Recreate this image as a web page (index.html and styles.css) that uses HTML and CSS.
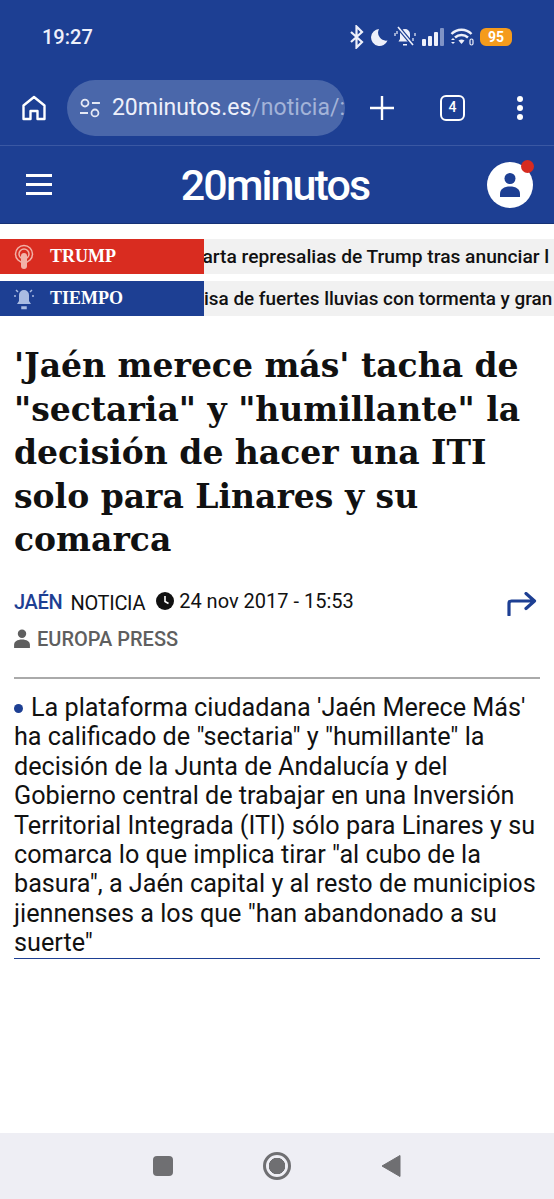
FILE: index.html

```html
<!DOCTYPE html>
<html lang="es">
<head>
  <meta charset="UTF-8" />
  <meta name="viewport" content="width=device-width, initial-scale=1.0"/>
  <title>20minutos</title>
  <link rel="stylesheet" href="styles.css">
</head>
<body>
  <!-- Status bar -->
  <div class="status-bar">
    <span class="clock">19:27</span>
    <div class="status-icons">
      <svg width="15" height="24" viewBox="0 0 15 24"><path d="M2 7l11 10-5.500 5.500V1.500L13 7 2 17" fill="none" stroke="#eef0fa" stroke-width="2.200"/></svg>
      <svg width="18" height="19" viewBox="0 0 18 19"><path d="M9 1a8.500 8.500 0 1 0 8.500 11.500A8 8 0 0 1 9 1z" fill="#eef0fa"/></svg>
      <svg width="22" height="22" viewBox="0 0 22 22"><path d="M11 3a5 5 0 0 1 5 5v5l1.500 2.500h-13L6 13V8a5 5 0 0 1 5-5zM9 18h4v1.500H9z" fill="#eef0fa"/><path d="M1 7v3M21 7v3M3 5v3M19 12v3" stroke="#eef0fa" stroke-width="1.200"/><path d="M4 1l15 18" stroke="#1d3f93" stroke-width="4"/><path d="M4 1l15 18" stroke="#eef0fa" stroke-width="1.600"/></svg>
      <svg width="22" height="18" viewBox="0 0 22 18"><rect x="0" y="11" width="4" height="7" rx="1" fill="#eef0fa"/><rect x="6" y="8" width="4" height="10" rx="1" fill="#eef0fa"/><rect x="12" y="4" width="4" height="14" rx="1" fill="#eef0fa"/><rect x="18" y="0" width="4" height="18" rx="1" fill="#7f93c6"/></svg>
      <svg width="24" height="20" viewBox="0 0 24 20"><path d="M1.500 7a14 14 0 0 1 20 0M5 10.500a9.500 9.500 0 0 1 13 0" fill="none" stroke="#eef0fa" stroke-width="2.400"/><path d="M8.500 13.500a5 5 0 0 1 6 0L11.500 17z" fill="#eef0fa"/><path d="M1 13l2-2 2 2zM1 15l2 2 2-2z" fill="#eef0fa"/><rect x="20" y="12" width="3" height="6" rx="1.500" fill="none" stroke="#eef0fa" stroke-width="1.200"/></svg>
      <span class="battery">95</span>
    </div>
  </div>

  <!-- Browser toolbar -->
  <div class="browser-bar">
    <svg class="home-icon" width="26" height="28" viewBox="0 0 26 28"><path d="M2.500 25V11.500L13 3l10.500 8.500V25h-7v-8h-7v8z" fill="none" stroke="#fff" stroke-width="2.400" stroke-linejoin="round"/></svg>
    <div class="url-pill">
      <svg width="22" height="20" viewBox="0 0 22 20"><circle cx="6" cy="5" r="3.500" fill="none" stroke="#e4e8f4" stroke-width="1.800"/><path d="M13 5h8M1 15h8" stroke="#e4e8f4" stroke-width="1.800"/><circle cx="16" cy="15" r="3.500" fill="none" stroke="#e4e8f4" stroke-width="1.800"/></svg>
      <span class="url-text">20minutos.es<span class="url-path">/noticia/:</span></span>
    </div>
    <svg class="plus-icon" width="26" height="26" viewBox="0 0 26 26"><path d="M13 1v24M1 13h24" stroke="#fff" stroke-width="2.400"/></svg>
    <span class="tab-count">4</span>
    <div class="menu-dots"><i></i><i></i><i></i></div>
  </div>

  <!-- Site header -->
  <header class="site-header">
    <div class="burger"><i></i><i></i><i></i></div>
    <span class="logo">20minutos</span>
    <div class="avatar">
      <svg width="22" height="26" viewBox="0 0 22 26"><circle cx="11" cy="6.500" r="5.500" fill="#1d3f93"/><path d="M1 25v-3c0-5 4-7.500 10-7.500s10 2.500 10 7.500v3z" fill="#1d3f93"/></svg>
      <span class="avatar-dot"></span>
    </div>
  </header>

  <!-- Tickers -->
  <div class="tickers">
    <div class="ticker">
      <div class="ticker-label red">
        <svg width="20" height="26" viewBox="0 0 20 26"><circle cx="10" cy="10" r="8.500" fill="none" stroke="#f2b2a8" stroke-width="1.500"/><circle cx="10" cy="10" r="5" fill="none" stroke="#f2b2a8" stroke-width="1.500"/><rect x="7" y="9" width="6" height="16" rx="3" fill="#f2b2a8"/></svg>
        <span>TRUMP</span>
      </div>
      <p class="ticker-text">carta represalias de Trump tras anunciar l</p>
    </div>
    <div class="ticker">
      <div class="ticker-label blue">
        <svg width="20" height="24" viewBox="1 0 20 24"><path d="M11 3a5 5 0 0 1 5 5v6l2 3H4l2-3V8a5 5 0 0 1 5-5z" fill="#a9bbe2"/><path d="M9 20h4v1.500H9zM1 9h2M19 9h2M3 3l2 2M19 3l-2 2" stroke="#a9bbe2" stroke-width="1.500"/></svg>
        <span>TIEMPO</span>
      </div>
      <p class="ticker-text second">isa de fuertes lluvias con tormenta y gran</p>
    </div>
  </div>

  <!-- Article -->
  <main class="article">
    <h1>'Jaén merece más' tacha de "sectaria" y "humillante" la decisión de hacer una ITI solo para Linares y su comarca</h1>

    <div class="meta">
      <div class="meta-info">
        <div class="meta-row">
          <a class="section-name">JAÉN</a>
          <span class="kind">NOTICIA</span>
          <svg class="clock-icon" width="18" height="18" viewBox="0 0 18 18"><circle cx="9" cy="9" r="9" fill="#111"/><path d="M9 4v5.500l3.500 2" fill="none" stroke="#fff" stroke-width="1.600"/></svg>
          <span class="date">24 nov 2017 - 15:53</span>
        </div>
        <div class="author">
          <svg width="16" height="19" viewBox="0 0 15 18"><circle cx="7.500" cy="4.500" r="4" fill="#5f5f5f"/><path d="M0 18v-3c0-3 3-5 7.500-5s7.500 2 7.500 5v3z" fill="#5f5f5f"/></svg>
          <span>EUROPA PRESS</span>
        </div>
      </div>
      <svg class="share-icon" width="30" height="24" viewBox="0 0 30 24"><path d="M2 23V11.500Q2 9 4.500 9H27M19 1.500L27.500 9 19 16.500" fill="none" stroke="#1d3f93" stroke-width="3.200" stroke-linecap="round" stroke-linejoin="round"/></svg>
    </div>

    <div class="lead">
      <p>La plataforma ciudadana 'Jaén Merece Más' ha calificado de "sectaria" y "humillante" la decisión de la Junta de Andalucía y del Gobierno central de trabajar en una Inversión Territorial Integrada (ITI) sólo para Linares y su comarca lo que implica tirar "al cubo de la basura", a Jaén capital y al resto de municipios jiennenses a los que "han abandonado a su suerte"</p>
    </div>
  </main>

  <!-- Android nav -->
  <div class="nav-bar">
    <span class="nav-square"></span>
    <span class="nav-home"></span>
    <svg width="20" height="24" viewBox="0 0 20 24"><path d="M19 1.500v21L1 12z" fill="#6f6f72" stroke="#6f6f72" stroke-linejoin="round"/></svg>
  </div>
</body>
</html>
```

FILE: styles.css

```css
* {
  box-sizing: border-box;
}
body {
  margin: 0;
  height: 1199px;
  display: flex;
  flex-direction: column;
  font-family: Roboto, sans-serif;
  background-color: #fff;
  overflow: hidden;
}
.status-bar {
  height: 72px;
  flex: none;
  background-color: #1d3f93;
  display: flex;
  align-items: center;
  justify-content: space-between;
  padding: 2px 42px 0 42px;
  color: #eef0fa;
}
.clock {
  font-size: 20px;
  font-weight: 500;
}
.status-icons {
  display: flex;
  align-items: center;
  gap: 6px;
}
.battery {
  background-color: #f59b1c;
  color: #fff;
  font-size: 14px;
  font-weight: 700;
  width: 32px;
  height: 18px;
  line-height: 18px;
  text-align: center;
  border-radius: 6px;
}
.browser-bar {
  height: 74px;
  flex: none;
  background-color: #1d3f93;
  border-bottom: 1px solid #3a58a3;
  display: flex;
  align-items: center;
  padding: 0 21px 2px 21px;
}
.url-pill {
  width: 278px;
  height: 56px;
  margin-left: 20px;
  border-radius: 28px;
  background-color: #4a67aa;
  display: flex;
  align-items: center;
  gap: 11px;
  padding-left: 12px;
  overflow: hidden;
}
.url-text {
  font-size: 23px;
  color: #eef0fa;
  white-space: nowrap;
}
.url-path {
  color: #a3b3d8;
}
.plus-icon {
  margin-left: 24px;
}
.tab-count {
  width: 25px;
  height: 26px;
  margin-left: 45px;
  border: 2.500px solid #fff;
  border-radius: 6px;
  color: #fff;
  font-size: 14px;
  font-weight: 500;
  line-height: 21px;
  text-align: center;
}
.menu-dots {
  margin-left: 52px;
  display: flex;
  flex-direction: column;
  gap: 3px;
}
.menu-dots i {
  width: 6px;
  height: 6px;
  border-radius: 50%;
  background-color: #fff;
}
.site-header {
  height: 78px;
  flex: none;
  background-color: #1d3f93;
  border-bottom: 1px solid #163276;
  display: flex;
  align-items: center;
  justify-content: space-between;
  padding: 0 21px 0 26px;
}
.burger {
  display: flex;
  flex-direction: column;
  gap: 6px;
}
.burger i {
  width: 26px;
  height: 3px;
  background-color: #fff;
}
.logo {
  color: #fff;
  font-size: 43px;
  font-weight: 500;
  letter-spacing: -1.900px;
  margin-left: 11px;
}
.avatar {
  position: relative;
  width: 46px;
  height: 46px;
  border-radius: 50%;
  background-color: #fff;
  display: flex;
  align-items: center;
  justify-content: center;
}
.avatar-dot {
  position: absolute;
  top: -2px;
  right: -1px;
  width: 13px;
  height: 13px;
  border-radius: 50%;
  background-color: #d62b20;
}
.tickers {
  flex: none;
  display: flex;
  flex-direction: column;
  gap: 7px;
  padding-top: 15px;
}
.ticker {
  position: relative;
  height: 35px;
  background-color: #f1f1f1;
  overflow: hidden;
}
.ticker-text {
  margin: 0;
  padding-left: 192.500px;
  font-size: 19.200px;
  font-weight: 500;
  line-height: 35px;
  color: #111;
  white-space: nowrap;
}
.ticker-text.second {
  padding-left: 204px;
  font-size: 18.900px;
}
.ticker-label {
  position: absolute;
  left: 0;
  top: 0;
  width: 204px;
  height: 35px;
  display: flex;
  align-items: center;
  gap: 16px;
  padding-left: 14px;
  color: #fff;
  font-family: "Liberation Serif", serif;
  font-size: 18px;
  font-weight: 700;
}
.ticker-label.red {
  background-color: #d92c20;
}
.ticker-label.blue {
  background-color: #1d3f93;
}
.article {
  flex: 1;
  padding: 0 14px;
}
h1 {
  margin: 28px 0 0;
  font-family: "DejaVu Serif", serif;
  font-size: 33px;
  line-height: 43.600px;
  font-weight: 700;
  color: #111;
}
.meta {
  margin-top: 25px;
  display: flex;
  justify-content: space-between;
  align-items: flex-start;
  padding-right: 3px;
}
.meta-row {
  display: flex;
  align-items: center;
  height: 30px;
}
.section-name {
  color: #1d3f93;
  font-size: 20px;
  font-weight: 500;
  letter-spacing: -0.300px;
}
.kind {
  margin-left: 8px;
  font-size: 20px;
  letter-spacing: -0.300px;
  color: #111;
  padding-top: 2px;
}
.clock-icon {
  margin-left: 11px;
  margin-bottom: 2px;
}
.date {
  margin-left: 5px;
  font-size: 20px;
  color: #111;
  padding-bottom: 2px;
}
.author {
  margin-top: 10px;
  display: flex;
  align-items: center;
  gap: 7px;
  color: #5f5f5f;
  font-size: 20px;
  font-weight: 500;
}
.share-icon {
  margin-top: 5px;
}
.lead {
  margin-top: 26px;
  padding-top: 14px;
  border-top: 2px solid #aaa;
  border-bottom: 1px solid #1d3f93;
}
.lead p {
  margin: 0;
  font-size: 25.200px;
  line-height: 29.400px;
  color: #111;
}
.lead p::before {
  content: "";
  display: inline-block;
  width: 9px;
  height: 9px;
  margin: 0 8px 3px 0;
  border-radius: 50%;
  background-color: #1d3f93;
}
.nav-bar {
  height: 66px;
  flex: none;
  background-color: #eeeef4;
  display: flex;
  align-items: center;
  justify-content: center;
  gap: 90px;
}
.nav-square {
  width: 20px;
  height: 20px;
  border-radius: 4px;
  background-color: #6f6f72;
}
.nav-home {
  width: 28px;
  height: 28px;
  border-radius: 50%;
  border: 3px solid #6f6f72;
  background: radial-gradient(circle, #6f6f72 0 8px, #eeeef4 8.500px);
}
```
